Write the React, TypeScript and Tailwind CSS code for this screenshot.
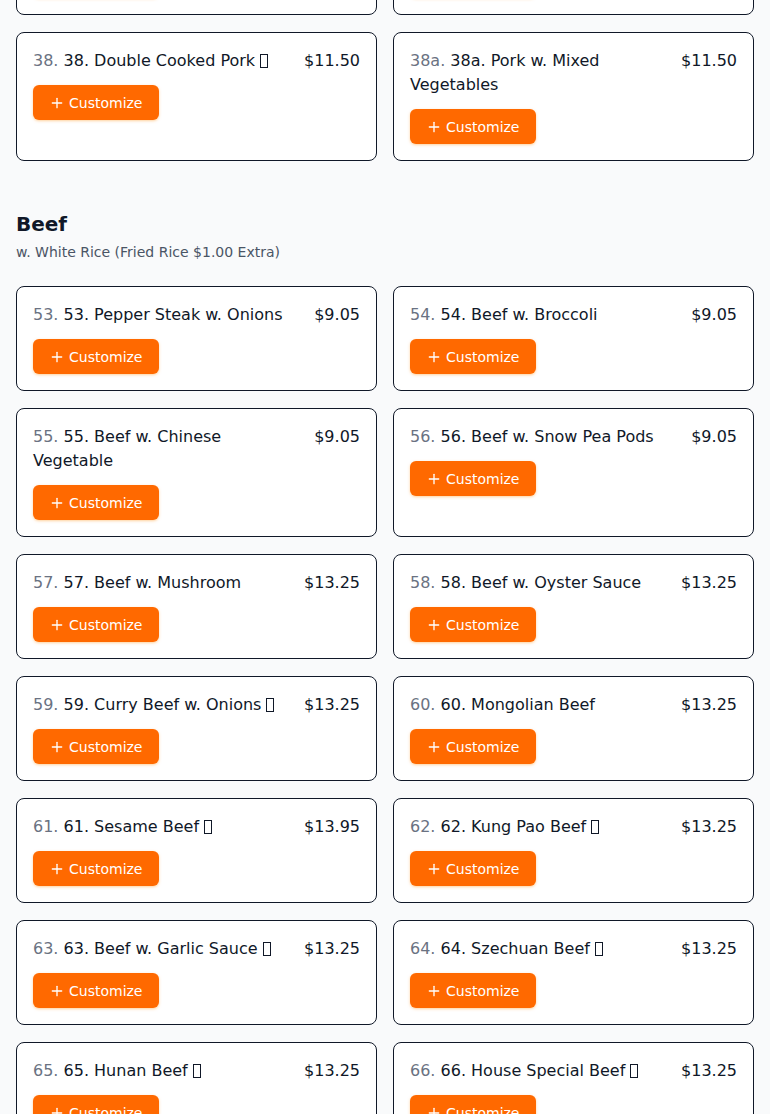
import { Plus } from 'lucide-react'

type Item = { num: string; name: string; price: string; hot?: boolean }

const PORK_TAIL: Item[] = [
  { num: '37', name: '37. Pork w. Oyster Sauce', price: '$11.50' },
  { num: '37a', name: '37a. Pork w. Garlic Sauce', price: '$11.50' },
  { num: '38', name: '38. Double Cooked Pork', price: '$11.50', hot: true },
  { num: '38a', name: '38a. Pork w. Mixed Vegetables', price: '$11.50' },
]

const BEEF: Item[] = [
  { num: '53', name: '53. Pepper Steak w. Onions', price: '$9.05' },
  { num: '54', name: '54. Beef w. Broccoli', price: '$9.05' },
  { num: '55', name: '55. Beef w. Chinese Vegetable', price: '$9.05' },
  { num: '56', name: '56. Beef w. Snow Pea Pods', price: '$9.05' },
  { num: '57', name: '57. Beef w. Mushroom', price: '$13.25' },
  { num: '58', name: '58. Beef w. Oyster Sauce', price: '$13.25' },
  { num: '59', name: '59. Curry Beef w. Onions', price: '$13.25', hot: true },
  { num: '60', name: '60. Mongolian Beef', price: '$13.25' },
  { num: '61', name: '61. Sesame Beef', price: '$13.95', hot: true },
  { num: '62', name: '62. Kung Pao Beef', price: '$13.25', hot: true },
  { num: '63', name: '63. Beef w. Garlic Sauce', price: '$13.25', hot: true },
  { num: '64', name: '64. Szechuan Beef', price: '$13.25', hot: true },
  { num: '65', name: '65. Hunan Beef', price: '$13.25', hot: true },
  { num: '66', name: '66. House Special Beef', price: '$13.25', hot: true },
  { num: '67', name: '67. Beef w. Black Bean Sauce', price: '$13.25' },
  { num: '68', name: '68. Orange Beef', price: '$13.95', hot: true },
]

// the pepper emoji shows as a missing-glyph box in the screenshot
function Tofu() {
  return (
    <span
      aria-label="🌶️"
      className="ml-[5px] inline-block h-[14px] w-[8px] translate-y-[2px] border border-gray-900"
    />
  )
}

function MenuCard({ item }: { item: Item }) {
  return (
    <div className="rounded-lg border border-gray-900 bg-white p-4">
      <div className="flex items-start justify-between gap-4">
        <p className="flex-1 text-base leading-6 text-gray-900">
          <span className="text-gray-500">{item.num}.</span> {item.name}
          {item.hot && <Tofu />}
        </p>
        <span className="shrink-0 text-base leading-6 text-gray-900">{item.price}</span>
      </div>
      <button className="mt-3 flex h-[35px] items-center gap-1 rounded-md bg-orange-500 px-4 text-sm text-white shadow-sm shadow-orange-200">
        <Plus className="h-4 w-4" strokeWidth={2} />
        Customize
      </button>
    </div>
  )
}

export default function App() {
  return (
    <div className="min-h-screen overflow-hidden bg-gray-50 px-4 font-['DejaVu_Sans',sans-serif]">
      <div className="-mt-[90px]">
        {/* tail of the pork section */}
        <div className="grid grid-cols-2 gap-x-4 gap-y-[17px]">
          {PORK_TAIL.map((item) => (
            <MenuCard key={item.num} item={item} />
          ))}
        </div>

        {/* Beef */}
        <section className="mt-[49px]">
          <h2 className="text-xl leading-7 font-bold text-gray-900">Beef</h2>
          <p className="mt-1 text-sm leading-5 text-gray-600">w. White Rice (Fried Rice $1.00 Extra)</p>
          <div className="mt-6 grid grid-cols-2 gap-x-4 gap-y-[17px] pb-8">
            {BEEF.map((item) => (
              <MenuCard key={item.num} item={item} />
            ))}
          </div>
        </section>
      </div>
    </div>
  )
}
